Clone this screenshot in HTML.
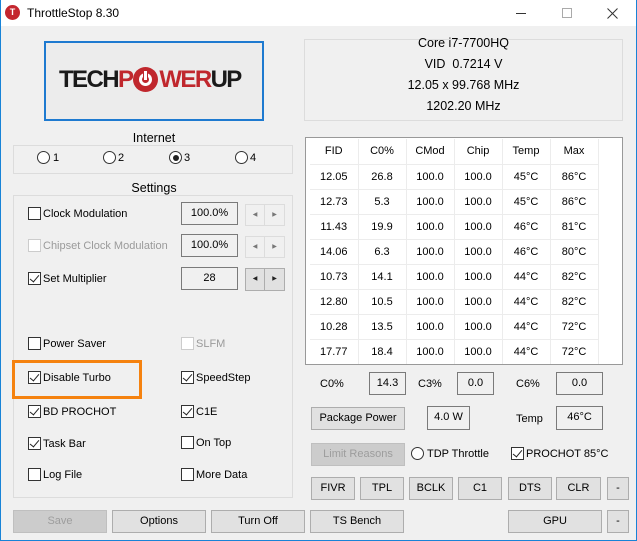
<!DOCTYPE html>
<html><head><meta charset="utf-8"><style>
*{box-sizing:border-box;margin:0;padding:0}
body{width:637px;height:541px;overflow:hidden;background:#f0f0f0;font-family:"Liberation Sans",Arial,sans-serif;font-size:11px;color:#000;position:relative}
.a{position:absolute}
.win{position:absolute;left:0;top:0;width:637px;height:541px;border:1px solid #1883d7;border-top:none}
.tb{position:absolute;left:0;top:0;width:637px;height:26px;background:#fff}
.grp{position:absolute;border:1px solid #dcdcdc}
.gt{position:absolute;background:#f0f0f0;padding:0 3px;font-size:12.5px;transform:translateX(-50%)}
.cb{position:absolute;width:13px;height:13px;border:1px solid #333;background:#fff}
.cb.d{border-color:#ccc}
.cb.c::after{content:"";position:absolute;left:3px;top:0px;width:4px;height:8px;border:solid #222;border-width:0 1.5px 1.5px 0;transform:rotate(40deg)}
.lbl{position:absolute;white-space:nowrap;margin-top:1px}
.box{position:absolute;border:1px solid #7a7a7a;background:#f0f0f0;text-align:center;line-height:20px}
.btn{position:absolute;border:1px solid #adadad;background:#e1e1e1;text-align:center;line-height:21px;height:23px}
.btn.d{color:#9d9d9d;background:#cccccc;border-color:#bfbfbf}
.rad{position:absolute;width:13px;height:13px;border:1px solid #333;border-radius:50%;background:#fff}
.rad.s::after{content:"";position:absolute;left:2.5px;top:2.5px;width:6px;height:6px;border-radius:50%;background:#222}
.arr{position:absolute;border:1px solid #dcdcdc;background:#f0f0f0}
.arr div{position:absolute;top:0;height:100%;width:50%;font-size:6px;line-height:20px;text-align:center;color:#777}
table{border-collapse:collapse}
td{width:48px;height:25px;text-align:center;border-right:1px solid #ececec;border-bottom:1px solid #ececec;font-size:11px}
</style></head><body>
<div class="tb"></div>
<div class="a" style="left:5px;top:5px;width:15px;height:15px;border-radius:50%;background:#c4262e;color:#fff;font-size:9px;font-weight:bold;text-align:center;line-height:15px">T</div>
<div class="lbl" style="left:27px;top:5px;font-size:12px">ThrottleStop 8.30</div>
<div class="a" style="left:516px;top:13px;width:10px;height:1px;background:#333"></div>
<div class="a" style="left:562px;top:8px;width:10px;height:10px;border:1px solid #aaa"></div>
<svg class="a" style="left:607px;top:8px" width="11" height="11"><path d="M0.5 0.5L10.5 10.5M10.5 0.5L0.5 10.5" stroke="#333" stroke-width="1"/></svg>
<div class="win"></div>

<div class="a" style="left:44px;top:41px;width:220px;height:80px;border:2px solid #1e7ad0;background:#ececec"></div>
<div class="lbl" style="left:59px;top:65px;font-size:24px;font-weight:bold;letter-spacing:-1.6px;color:#1a1a1a">TECH<span style="color:#c0272d">P</span><span style="display:inline-block;width:25px;height:25px;border-radius:50%;background:#c0272d;vertical-align:-5px;position:relative;margin:0 1px"><span style="position:absolute;left:6px;top:6px;width:13px;height:13px;border:3px solid #fff;border-radius:50%"></span><span style="position:absolute;left:10px;top:3px;width:5px;height:11px;background:#fff;border:1px solid #c0272d"></span></span><span style="color:#c0272d">WER</span>UP</div>

<div class="grp" style="left:304px;top:39px;width:319px;height:82px"></div>
<div class="lbl" style="left:304px;width:319px;text-align:center;top:32px;font-size:12.5px;line-height:21px">Core i7-7700HQ<br>VID&nbsp; 0.7214 V<br>12.05 x 99.768 MHz<br>1202.20 MHz</div>

<div class="grp" style="left:13px;top:145px;width:280px;height:29px"></div>
<div class="gt" style="left:154px;top:131px">Internet</div>
<div class="rad" style="left:37px;top:151px"></div><div class="lbl" style="left:53px;top:151px">1</div>
<div class="rad" style="left:103px;top:151px"></div><div class="lbl" style="left:118px;top:151px">2</div>
<div class="rad s" style="left:169px;top:151px"></div><div class="lbl" style="left:184px;top:151px">3</div>
<div class="rad" style="left:235px;top:151px"></div><div class="lbl" style="left:250px;top:151px">4</div>

<div class="grp" style="left:13px;top:195px;width:280px;height:303px"></div>
<div class="gt" style="left:154px;top:181px">Settings</div>

<div class="cb" style="left:28px;top:207px"></div><div class="lbl" style="left:43px;top:207px">Clock Modulation</div>
<div class="box" style="left:181px;top:202px;width:57px;height:23px">100.0%</div>
<div class="arr" style="left:245px;top:204px;width:40px;height:22px"><div style="left:0;border-right:1px solid #dcdcdc">◀</div><div style="left:50%">▶</div></div>

<div class="cb d" style="left:28px;top:239px"></div><div class="lbl" style="left:43px;top:239px;color:#9a9a9a">Chipset Clock Modulation</div>
<div class="box" style="left:181px;top:234px;width:57px;height:23px">100.0%</div>
<div class="arr" style="left:245px;top:236px;width:40px;height:22px"><div style="left:0;border-right:1px solid #dcdcdc">◀</div><div style="left:50%">▶</div></div>

<div class="cb c" style="left:28px;top:272px"></div><div class="lbl" style="left:43px;top:272px">Set Multiplier</div>
<div class="box" style="left:181px;top:267px;width:57px;height:23px">28</div>
<div class="arr" style="left:245px;top:268px;width:40px;height:23px;border-color:#adadad;background:#e1e1e1"><div style="left:0;border-right:1px solid #adadad;color:#222">◀</div><div style="left:50%;color:#222">▶</div></div>

<div class="cb" style="left:28px;top:337px"></div><div class="lbl" style="left:43px;top:337px">Power Saver</div>
<div class="cb d" style="left:181px;top:337px"></div><div class="lbl" style="left:196px;top:337px;color:#9a9a9a">SLFM</div>

<div class="a" style="left:12px;top:360px;width:130px;height:39px;border:3px solid #f5820f"></div>
<div class="cb c" style="left:28px;top:371px"></div><div class="lbl" style="left:43px;top:371px">Disable Turbo</div>
<div class="cb c" style="left:181px;top:371px"></div><div class="lbl" style="left:196px;top:371px">SpeedStep</div>
<div class="cb c" style="left:28px;top:405px"></div><div class="lbl" style="left:43px;top:405px">BD PROCHOT</div>
<div class="cb c" style="left:181px;top:405px"></div><div class="lbl" style="left:196px;top:405px">C1E</div>
<div class="cb c" style="left:28px;top:437px"></div><div class="lbl" style="left:43px;top:437px">Task Bar</div>
<div class="cb" style="left:181px;top:436px"></div><div class="lbl" style="left:196px;top:436px">On Top</div>
<div class="cb" style="left:28px;top:468px"></div><div class="lbl" style="left:43px;top:468px">Log File</div>
<div class="cb" style="left:181px;top:468px"></div><div class="lbl" style="left:196px;top:468px">More Data</div>

<div class="a" style="left:305px;top:137px;width:318px;height:228px;border:1px solid #999;background:#fff;overflow:hidden;padding:1px 0 0 4px">
<table>
<tr><td>FID</td><td>C0%</td><td>CMod</td><td>Chip</td><td>Temp</td><td>Max</td></tr>
<tr><td>12.05</td><td>26.8</td><td>100.0</td><td>100.0</td><td>45°C</td><td>86°C</td></tr>
<tr><td>12.73</td><td>5.3</td><td>100.0</td><td>100.0</td><td>45°C</td><td>86°C</td></tr>
<tr><td>11.43</td><td>19.9</td><td>100.0</td><td>100.0</td><td>46°C</td><td>81°C</td></tr>
<tr><td>14.06</td><td>6.3</td><td>100.0</td><td>100.0</td><td>46°C</td><td>80°C</td></tr>
<tr><td>10.73</td><td>14.1</td><td>100.0</td><td>100.0</td><td>44°C</td><td>82°C</td></tr>
<tr><td>12.80</td><td>10.5</td><td>100.0</td><td>100.0</td><td>44°C</td><td>82°C</td></tr>
<tr><td>10.28</td><td>13.5</td><td>100.0</td><td>100.0</td><td>44°C</td><td>72°C</td></tr>
<tr><td>17.77</td><td>18.4</td><td>100.0</td><td>100.0</td><td>44°C</td><td>72°C</td></tr>
</table></div>

<div class="lbl" style="left:320px;top:377px">C0%</div>
<div class="box" style="left:369px;top:372px;width:37px;height:23px">14.3</div>
<div class="lbl" style="left:418px;top:377px">C3%</div>
<div class="box" style="left:457px;top:372px;width:37px;height:23px">0.0</div>
<div class="lbl" style="left:516px;top:377px">C6%</div>
<div class="box" style="left:556px;top:372px;width:47px;height:23px">0.0</div>

<div class="btn" style="left:311px;top:407px;width:94px">Package Power</div>
<div class="box" style="left:427px;top:406px;width:43px;height:24px">4.0 W</div>
<div class="lbl" style="left:516px;top:412px">Temp</div>
<div class="box" style="left:556px;top:406px;width:47px;height:24px">46°C</div>

<div class="btn d" style="left:311px;top:443px;width:94px">Limit Reasons</div>
<div class="rad" style="left:411px;top:447px"></div><div class="lbl" style="left:427px;top:447px">TDP Throttle</div>
<div class="cb c" style="left:511px;top:447px"></div><div class="lbl" style="left:526px;top:447px">PROCHOT 85°C</div>

<div class="btn" style="left:311px;top:477px;width:44px">FIVR</div>
<div class="btn" style="left:360px;top:477px;width:44px">TPL</div>
<div class="btn" style="left:409px;top:477px;width:44px">BCLK</div>
<div class="btn" style="left:458px;top:477px;width:44px">C1</div>
<div class="btn" style="left:508px;top:477px;width:44px">DTS</div>
<div class="btn" style="left:556px;top:477px;width:45px">CLR</div>
<div class="btn" style="left:607px;top:477px;width:22px">-</div>

<div class="btn d" style="left:13px;top:510px;width:94px">Save</div>
<div class="btn" style="left:112px;top:510px;width:94px">Options</div>
<div class="btn" style="left:211px;top:510px;width:94px">Turn Off</div>
<div class="btn" style="left:310px;top:510px;width:94px">TS Bench</div>
<div class="btn" style="left:508px;top:510px;width:94px">GPU</div>
<div class="btn" style="left:607px;top:510px;width:22px">-</div>
</body></html>
